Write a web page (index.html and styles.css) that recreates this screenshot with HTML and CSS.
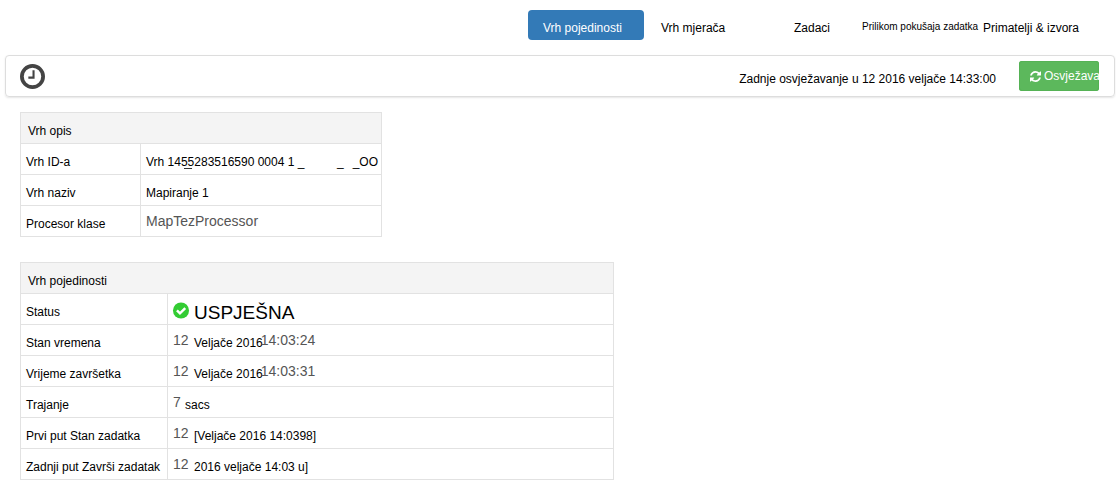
FILE: index.html
```html
<!DOCTYPE html>
<html lang="hr">
<head>
<meta charset="utf-8">
<title>Vrh pojedinosti</title>
<link rel="stylesheet" href="styles.css">
</head>
<body>
<nav class="tabs">
  <a class="tab active" href="#details">Vrh pojedinosti</a>
  <a class="tab" href="#counters">Vrh mjerača</a>
  <a class="tab" href="#tasks">Zadaci</a>
  <a class="tab small" href="#attempts">Prilikom pokušaja zadatka</a>
  <a class="tab" href="#sources">Primatelji &amp; izvora</a>
</nav>
<header class="bar">
  <svg class="clock" viewBox="0 0 24 24" aria-hidden="true"><circle cx="12" cy="12" r="10.2" fill="none" stroke="#444" stroke-width="3.6"/><path d="M13 6v7.1H8" fill="none" stroke="#444" stroke-width="2"/></svg>
  <span class="updated">Zadnje osvježavanje u 12 2016 veljače 14:33:00</span>
  <button class="refresh" type="button"><svg class="sync" viewBox="0 0 1536 1536" aria-hidden="true"><path fill="#fff" d="M1511 928q0 5-1 7-64 268-268 434.500T764 1536q-146 0-282.500-55T238 1324l-129 129q-19 19-45 19t-45-19-19-45V960q0-26 19-45t45-19h448q26 0 45 19t19 45-19 45l-137 137q71 66 161 102t187 36q134 0 250-65t186-179q11-17 53-117 8-23 30-23h192q13 0 22.500 9.500t9.500 22.500zm25-800v448q0 26-19 45t-45 19h-448q-26 0-45-19t-19-45 19-45l138-138Q969 256 768 256q-134 0-250 65T332 500q-11 17-53 117-8 23-30 23H50q-13 0-22.500-9.500T18 608v-7q65-268 270-434.500T768 0q146 0 284 55.500T1297 212l130-129q19-19 45-19t45 19 19 45z"/></svg><span>Osvježava</span></button>
</header>
<main class="content">
  <table class="info description">
    <thead><tr><th colspan="2" scope="colgroup">Vrh opis</th></tr></thead>
    <tbody>
      <tr><th scope="row">Vrh ID-a</th><td><div class="vertex"><span>Vrh 14<span class="marked">55</span>283516590 0004 1 _</span><span class="tail"><span>_</span><span>_OO</span></span></div></td></tr>
      <tr><th scope="row">Vrh naziv</th><td>Mapiranje 1</td></tr>
      <tr><th scope="row">Procesor klase</th><td><span class="value">MapTezProcessor</span></td></tr>
    </tbody>
  </table>
  <table class="info details">
    <thead><tr><th colspan="2" scope="colgroup">Vrh pojedinosti</th></tr></thead>
    <tbody>
      <tr><th scope="row">Status</th><td><div class="status"><svg class="check" viewBox="0 0 18 18" aria-hidden="true"><circle cx="9" cy="9" r="8.5" fill="#3c3"/><path d="M4.700 8.800l3.200 3.200 5.600-5.600" fill="none" stroke="#fff" stroke-width="2.600"/></svg><span>USPJEŠNA</span></div></td></tr>
      <tr><th scope="row">Stan vremena</th><td><span class="value day">12</span><span>Veljače 2016</span><span class="value time">14:03:24</span></td></tr>
      <tr><th scope="row">Vrijeme završetka</th><td><span class="value day">12</span><span>Veljače 2016</span><span class="value time">14:03:31</span></td></tr>
      <tr><th scope="row">Trajanje</th><td><span class="value count">7</span><span>sacs</span></td></tr>
      <tr><th scope="row">Prvi put Stan zadatka</th><td><span class="value day">12</span><span>[Veljače 2016 14:0398]</span></td></tr>
      <tr><th scope="row">Zadnji put Završi zadatak</th><td><span class="value day">12</span><span>2016 veljače 14:03 u]</span></td></tr>
    </tbody>
  </table>
</main>
</body>
</html>
```
FILE: styles.css
```css
* { box-sizing: border-box; }
body {
  margin: 0;
  background: #fff;
  color: #000;
  font: 12px/18px "Liberation Sans", Arial, sans-serif;
}
.tabs {
  display: grid;
  grid-template-columns: 116px 131px 66px 119px 132px;
  column-gap: 2px;
  justify-content: end;
  padding: 10px 16px 15px 0;
}
.tab {
  height: 30px;
  padding: 9px 0 3px 15px;
  border-radius: 4px;
  color: #000;
  text-decoration: none;
  white-space: nowrap;
}
.tab.active { background: #337ab7; color: #fff; }
.tab.small { padding-top: 8px; font-size: 10px; }
.bar {
  display: flex;
  align-items: center;
  height: 42px;
  margin: 0 1px 0 5px;
  padding: 0 15px 0 14px;
  border: 1px solid #ddd;
  border-radius: 4px;
  box-shadow: 0 1px 2px rgba(0, 0, 0, .1);
}
.clock { width: 25px; height: 25px; }
.updated { margin: 6px 23px 0 auto; }
.refresh {
  display: flex;
  align-items: center;
  gap: 3px;
  width: 80px;
  height: 30px;
  padding: 0 0 0 11px;
  border: 0;
  border-radius: 3px;
  background: #5cb85c;
  box-shadow: inset 0 0 0 1px #55b255;
  color: #fff;
  font: inherit;
  white-space: nowrap;
}
.sync { flex: none; width: 11px; height: 11px; }
.content { padding: 15px 20px 12px; }
.info {
  border-collapse: collapse;
  max-width: 100%;
}
.description { width: 362px; margin-bottom: 25px; }
.details { width: 594px; }
.info th, .info td {
  height: 31px;
  padding: 9px 0 3px 5px;
  border: 1px solid #e2e2e2;
  font-weight: normal;
  text-align: left;
  vertical-align: top;
  white-space: nowrap;
}
.info thead th { padding-left: 7px; background: #f4f4f4; }
.description tbody th { width: 120px; }
.details tbody th { width: 147px; }
.value {
  color: #555;
  font-size: 14px;
  line-height: 10px;
  vertical-align: 2px;
}
.day { display: inline-block; width: 21px; }
.count { display: inline-block; width: 12px; }
.time { margin-left: -2px; }
.vertex { display: flex; justify-content: space-between; padding-right: 3px; }
.tail { display: flex; gap: 9px; }
.marked { position: relative; }
.marked::after {
  content: "";
  position: absolute;
  left: 3px;
  right: 2px;
  bottom: 0;
  border-bottom: 1px solid #333;
}
.status {
  display: flex;
  align-items: center;
  gap: 4px;
  padding-top: 1px;
  font-size: 19px;
  line-height: 17px;
}
.check { width: 18px; height: 17px; margin: -4px 0 0 -1px; }
```
